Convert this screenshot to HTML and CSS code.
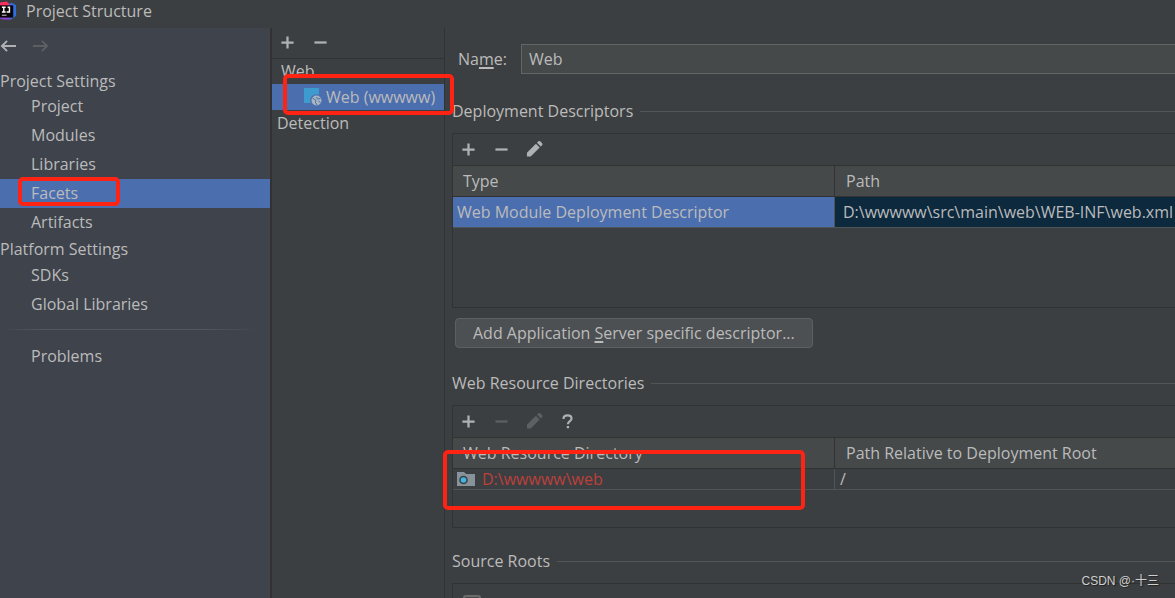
FILE: index.html
```html
<!DOCTYPE html>
<html lang="en">
<head>
<meta charset="utf-8">
<title>Project Structure</title>
<link rel="stylesheet" href="styles.css">
</head>
<body>
<svg class="sprite" aria-hidden="true">
  <symbol id="plus" viewBox="0 0 16 16"><path d="M8 1.500v13M1.500 8h13" stroke="currentColor" stroke-width="2.4" fill="none"/></symbol>
  <symbol id="minus" viewBox="0 0 16 16"><path d="M1.500 8h13" stroke="currentColor" stroke-width="2.4" fill="none"/></symbol>
  <symbol id="pencil" viewBox="0 0 18 18"><path d="M1 17v-4L10.500 3.500l4 4L5 17zM11.600 2.400l1.500-1.500q1-.8 2 0l2 2q.8 1 0 2l-1.500 1.500z" fill="currentColor"/></symbol>
  <symbol id="help" viewBox="0 0 16 16"><path d="M3.700 5.300C3.700 2.800 5.500 1.500 8 1.500s4.300 1.300 4.300 3.500c0 2.500-3.900 2.600-3.900 5.800" stroke="currentColor" stroke-width="2.300" fill="none"/><path d="M7.200 12.800h2.500v2.400H7.200z" fill="currentColor"/></symbol>
  <symbol id="arrow" viewBox="0 0 18 14"><path d="M1 7h15M10.500 1.500L16 7l-5.500 5.500" stroke="currentColor" stroke-width="2" fill="none"/></symbol>
</svg>
<div class="window">
  <header class="titlebar">
    <svg class="logo" viewBox="0 0 18 20" aria-hidden="true">
      <path d="M0 1l7-1 4 3-3 12-8 3z" fill="#f5315e"/>
      <path d="M9 4l3-3 5 3v11l-5 4-6-2z" fill="#2f6fe0"/>
      <path d="M0 15l7-1 5 5H3l-3-1z" fill="#8a45d8"/>
      <path d="M0 4h14v13H0z" fill="#0b0507"/>
      <path d="M2 6h4M4 6v5M2 11h4M7 11h3V6H8" stroke="#fff" stroke-width="1.500" fill="none"/>
      <path d="M2 14.500h5" stroke="#aaa" stroke-width="1.300"/>
    </svg>
    <h1 class="title">Project Structure</h1>
  </header>
  <div class="panes">
    <aside class="sidebar">
      <div class="history">
        <button class="tool back" aria-label="Back"><svg><use href="#arrow"/></svg></button>
        <button class="tool" aria-label="Forward" disabled><svg><use href="#arrow"/></svg></button>
      </div>
      <nav>
        <h2 class="group">Project Settings</h2>
        <a class="item" href="#project">Project</a>
        <a class="item" href="#modules">Modules</a>
        <a class="item" href="#libraries">Libraries</a>
        <a class="item selected" href="#facets" aria-current="page">Facets<span class="mark mark-facets"></span></a>
        <a class="item" href="#artifacts">Artifacts</a>
        <h2 class="group">Platform Settings</h2>
        <a class="item" href="#sdks">SDKs</a>
        <a class="item" href="#global">Global Libraries</a>
        <hr class="divider">
        <a class="item" href="#problems">Problems</a>
      </nav>
    </aside>
    <section class="facets">
      <div class="toolbar tree-tools">
        <button class="tool" aria-label="Add facet"><svg><use href="#plus"/></svg></button>
        <button class="tool" aria-label="Remove facet"><svg><use href="#minus"/></svg></button>
      </div>
      <ul class="tree">
        <li class="node root">Web</li>
        <li class="node leaf selected">
          <svg class="facet-icon" viewBox="0 0 18 18" aria-hidden="true">
            <path d="M0 0h15v15H0z" fill="#3d9bd0"/>
            <circle cx="12.500" cy="12.500" r="6.300" fill="#4b6eaf"/>
            <circle cx="12.500" cy="12.500" r="5" fill="#a9b5bf"/>
            <path d="M8.500 10l3.500 2.500-.5 2 1.500 2.500M12.500 9l1 2 3-.5M16.500 14.500l-2-1.500" stroke="#4b6eaf" stroke-width="1" fill="none"/>
          </svg>
          Web (wwwww)<span class="mark mark-web"></span>
        </li>
        <li class="node detection">Detection</li>
      </ul>
    </section>
    <main class="editor">
      <div class="name-row">
        <label class="name-label" for="name">Na<u>m</u>e:</label>
        <input id="name" class="name" type="text" value="Web">
      </div>
      <h2 class="section">Deployment Descriptors</h2>
      <div class="box descriptors">
        <div class="toolbar">
          <button class="tool" aria-label="Add descriptor"><svg><use href="#plus"/></svg></button>
          <button class="tool" aria-label="Remove descriptor"><svg><use href="#minus"/></svg></button>
          <button class="tool pencil" aria-label="Edit descriptor"><svg><use href="#pencil"/></svg></button>
        </div>
        <table>
          <thead><tr><th class="first" scope="col">Type</th><th scope="col">Path</th></tr></thead>
          <tbody><tr class="active"><td>Web Module Deployment Descriptor</td><td>D:\wwwww\src\main\web\WEB-INF\web.xml</td></tr></tbody>
        </table>
      </div>
      <button class="push">Add Application <u>S</u>erver specific descriptor...</button>
      <h2 class="section">Web Resource Directories</h2>
      <div class="box resources">
        <div class="toolbar">
          <button class="tool" aria-label="Add directory"><svg><use href="#plus"/></svg></button>
          <button class="tool" aria-label="Remove directory" disabled><svg><use href="#minus"/></svg></button>
          <button class="tool pencil" aria-label="Edit directory" disabled><svg><use href="#pencil"/></svg></button>
          <button class="tool" aria-label="Help"><svg><use href="#help"/></svg></button>
        </div>
        <table>
          <thead><tr><th class="first" scope="col">Web Resource Directory</th><th scope="col">Path Relative to Deployment Root</th></tr></thead>
          <tbody><tr class="plain"><td><span class="missing"><svg class="folder" viewBox="0 0 18 14" aria-hidden="true"><path d="M0 0h7l2 2h9v12H0z" fill="#87939a"/><circle cx="6.500" cy="8" r="4.300" fill="#3c3f41"/><circle cx="6.500" cy="8" r="2.800" fill="#40b6e0"/></svg>D:\wwwww\web</span></td><td>/</td></tr></tbody>
        </table>
        <span class="mark mark-resources"></span>
      </div>
      <h2 class="section">Source Roots</h2>
      <div class="box roots"><input type="checkbox" class="check" aria-label="Source root"></div>
    </main>
  </div>
  <div class="watermark">CSDN @·十三</div>
</div>
</body>
</html>
```
FILE: styles.css
```css
* { box-sizing: border-box; }

body {
  margin: 0;
  background: #3c3f41;
  color: #bbbbbb;
  font: 16px/24px "Open Sans", "Noto Sans CJK SC", sans-serif;
}

h1, h2, ul, hr { margin: 0; padding: 0; font-size: 16px; font-weight: 400; }
button, input { font: inherit; color: inherit; }
u { text-decoration-thickness: 2px; text-underline-offset: 2px; text-decoration-skip-ink: none; }

.sprite { position: absolute; width: 0; height: 0; }

.window {
  position: relative;
  display: flex;
  flex-direction: column;
  height: 100vh;
  overflow: hidden;
}

.titlebar { display: flex; align-items: center; gap: 9px; height: 28px; padding-bottom: 6px; flex: none; }
.logo { width: 17px; height: 20px; }

.panes { display: flex; flex: 1; min-height: 0; }

.sidebar { flex: 0 0 272px; background: #3e434c; border-right: 2px solid #323232; }
.history { display: flex; align-items: center; gap: 15px; height: 36px; margin-bottom: 5px; }
.group { height: 24px; }
.item {
  position: relative;
  display: block;
  padding-left: 31px;
  line-height: 29px;
  color: inherit;
  text-decoration: none;
}
.group:first-child { height: 23px; }
.selected { background: #4b6eaf; }
.divider { height: 1px; margin: 10px 9px 12px 0; border: 0; background: linear-gradient(90deg, #3e434c, #53575b 15%, #53575b 80%, #3e434c); }

.tool { display: flex; align-items: center; justify-content: center; width: 17px; height: 18px; padding: 0; border: 0; background: none; color: #afb1b3; }
.tool svg { width: 15px; height: 15px; }
.tool.pencil svg { width: 18px; height: 18px; }
.tool:disabled { color: #5d6062; }
.history .tool svg { width: 17px; height: 14px; }
.back { transform: scaleX(-1); }

.toolbar { display: flex; align-items: center; gap: 16px; height: 31px; padding: 0 0 1px 7px; }

.facets { flex: 0 0 173px; border-right: 1px solid #323232; }
.tree-tools { border-bottom: 1px solid #323232; }
.tree { list-style: none; }
.node { position: relative; height: 26px; }
.root { height: 25px; padding-left: 9px; }
.leaf { display: flex; align-items: center; gap: 4px; padding-left: 32px; white-space: nowrap; }
.facet-icon { width: 18px; height: 18px; }
.detection { padding: 1px 0 0 5px; }

.editor { flex: 1; min-width: 0; padding: 16px 0 0 7px; }
.name-row { display: flex; align-items: center; padding-left: 6px; }
.name-label { flex: 0 0 63px; }
.name { flex: 1; min-width: 0; height: 30px; padding: 0 7px; border: 1px solid #646464; border-right: 0; background: #45494a; outline: 0; }

.section { display: flex; align-items: center; gap: 7px; height: 24px; }
.section::after { content: ""; flex: 1; height: 1px; background: #555555; }
.name-row + .section { margin: 25px 0 10px; }
.push + .section { margin: 23px 0 10px; }
.box + .section { margin: 21px 0 10px; }

.box { position: relative; border: 1px solid #323232; border-right: 0; }
.descriptors { min-height: 175px; }
.resources { min-height: 123px; }
.roots { min-height: 60px; padding: 11px 10px; }
.check { display: block; appearance: none; width: 18px; height: 18px; margin: 0; border: 2px solid #6b6b6b; border-radius: 3px; background: #43494a; }

table { width: 100%; border-collapse: separate; border-spacing: 0; table-layout: fixed; }
th { height: 32px; padding: 0 11px; border: solid #323232; border-width: 1px 0; background: #45494a; font-weight: 400; text-align: left; }
th.first { width: 382px; padding-left: 10px; border-right-width: 1px; }
td { padding: 0 8px; border-bottom: 1px solid #515456; white-space: nowrap; }
td:first-child { padding-left: 4px; border-right: 1px solid #515456; }
.active td { height: 31px; background: #0d293e; }
.active td:first-child { background: #4b6eaf; }
.plain td { height: 21px; padding-top: 0; padding-bottom: 0; line-height: 20px; }
.plain td:last-child { padding-left: 5px; }
.missing { display: flex; align-items: center; gap: 7px; color: #bc3f3c; }
.folder { width: 18px; height: 14px; }

.push {
  display: block;
  height: 30px;
  margin: 10px 0 0 3px;
  padding: 0 17px;
  border: 1px solid #5e6060;
  border-radius: 4px;
  background: #4c5052;
  line-height: 24px;
}

.mark { position: absolute; border: 4px solid #ff2314; border-radius: 5px; pointer-events: none; z-index: 2; }
.mark-facets { left: 18px; top: -2px; width: 102px; height: 29px; }
.mark-web { left: 11px; top: -10px; width: 171px; height: 41px; }
.mark-resources { left: -10px; top: 44px; width: 362px; height: 60px; }

.watermark { position: absolute; right: 16px; bottom: 7px; font: 12px/20px "Liberation Sans", "Noto Sans CJK SC", sans-serif; color: #cfcfcf; text-shadow: 1px 1px 1px #222222; }
```
